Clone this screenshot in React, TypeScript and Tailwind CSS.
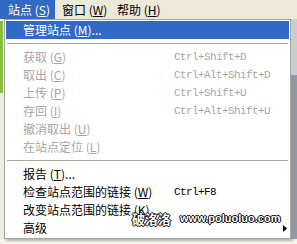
import React from "react";

const cjk = "font-['SimSun','Noto_Sans_CJK_SC',sans-serif]";
const mono = "font-['Liberation_Mono',monospace] text-[11px] tracking-[-0.6px]";

type Item = { label: string; key: string; tail?: string; shortcut?: string; disabled?: boolean; active?: boolean; sub?: boolean };

const groups: Item[][] = [
  [{ label: "管理站点", key: "M", tail: "...", active: true }],
  [
    { label: "获取", key: "G", shortcut: "Ctrl+Shift+D", disabled: true },
    { label: "取出", key: "C", shortcut: "Ctrl+Alt+Shift+D", disabled: true },
    { label: "上传", key: "P", shortcut: "Ctrl+Shift+U", disabled: true },
    { label: "存回", key: "I", shortcut: "Ctrl+Alt+Shift+U", disabled: true },
    { label: "撤消取出", key: "U", disabled: true },
    { label: "在站点定位", key: "L", disabled: true },
  ],
  [
    { label: "报告", key: "T", tail: "..." },
    { label: "检查站点范围的链接", key: "W", shortcut: "Ctrl+F8" },
    { label: "改变站点范围的链接", key: "K", tail: "..." },
    { label: "高级", key: "", sub: true },
  ],
];

const Label = ({ label, k, tail }: { label: string; k: string; tail?: string }) => (
  <span className="whitespace-nowrap">
    {label}
    {k && (
      <>
        {" "}(<u>{k}</u>)
      </>
    )}
    {tail}
  </span>
);

export default function App() {
  return (
    <div className={`relative w-[297px] h-[244px] overflow-hidden bg-[#f4f3ee] text-[12px] leading-none ${cjk}`}>
      {/* menu bar */}
      <div className="flex h-[19px] items-stretch bg-[#ece9d8] text-black">
        <div className="flex w-[55px] items-center bg-[#316ac5] pl-[8px] text-white">
          <Label label="站点" k="S" />
        </div>
        <div className="flex w-[62px] items-center pl-[7px]">
          <Label label="窗口" k="W" />
        </div>
        <div className="flex items-center">
          <Label label="帮助" k="H" />
        </div>
      </div>

      <div className="flex">
        {/* window behind, left edge */}
        <div className="w-[4px] bg-[#eeede6]">
          <div className="mt-[2px] h-[72px] w-[3px] bg-[#86c03a]" />
        </div>

        {/* dropdown */}
        <div className="w-[287px] border border-[#a7a6a0] bg-white p-[1px] shadow-[2px_2px_2px_rgba(0,0,0,0.25)]">
          {groups.map((g, gi) => (
            <div key={gi}>
              {gi > 0 && (
                <div className="flex h-[9px] items-center px-[1px]">
                  <div className="h-px w-full bg-[#aca899]" />
                </div>
              )}
              {g.map((it) => (
                <div
                  key={it.label}
                  className={`flex h-[18px] items-center pl-[17px] ${
                    it.active ? "bg-[#316ac5] text-white" : it.disabled ? "text-[#a6a6a6]" : "text-black"
                  }`}
                >
                  <div className="w-[151px] shrink-0">
                    <Label label={it.label} k={it.key} tail={it.tail} />
                  </div>
                  {it.shortcut && <span className={mono}>{it.shortcut}</span>}
                  {it.sub && (
                    <svg className="ml-auto mr-[2px]" width="4" height="7" viewBox="0 0 4 7">
                      <path d="M0 0 L4 3.5 L0 7 Z" fill="#000" />
                    </svg>
                  )}
                </div>
              ))}
            </div>
          ))}
        </div>

        {/* window behind, right edge */}
        <div className="flex-1 bg-[#8e98a6]">
          <div className="h-[56px] bg-[#c9ccd2]" />
        </div>
      </div>

      {/* watermark */}
      <div className="pointer-events-none absolute left-[132px] top-[212px] flex items-center gap-[9px] whitespace-nowrap font-bold text-white [text-shadow:1px_0_0_#000,-1px_0_0_#000,0_1px_0_#000,0_-1px_0_#000]">
        <span className="text-[13px]">破洛洛</span>
        <span className="font-['Liberation_Sans',sans-serif] text-[11px]">www.poluoluo.com</span>
      </div>
    </div>
  );
}
